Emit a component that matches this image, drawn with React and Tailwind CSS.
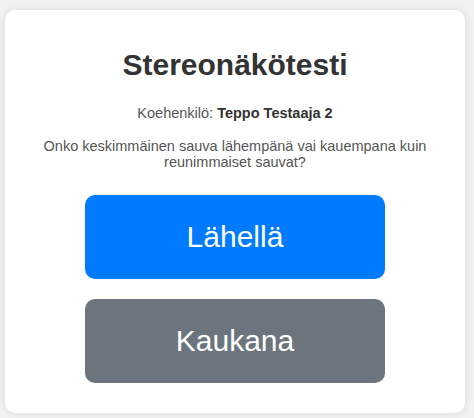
export default function App() {
  return (
    <div
      className="min-h-[418px] bg-[#f2f2f2] pt-[10px] pl-[5px] leading-[normal]"
      style={{ fontFamily: '"Liberation Sans", Arial, sans-serif' }}
    >
      <div className="w-[460px] rounded-[10px] bg-white shadow-[0_0_10px_rgba(0,0,0,0.1)] pt-[38px] pb-[30px] flex flex-col items-center text-center">
        <h1 className="text-[30px] font-bold text-[#333] leading-[normal]">Stereonäkötesti</h1>
        <p className="mt-[23px] text-[14.5px] leading-[16px] text-[#555]">
          Koehenkilö: <strong className="font-bold text-[#333]">Teppo Testaaja 2</strong>
        </p>
        <p className="mt-[17px] text-[14.5px] leading-[16px] text-[#555] px-[30px]">
          Onko keskimmäinen sauva lähempänä vai kauempana kuin reunimmaiset sauvat?
        </p>
        <button className="mt-[25px] w-[300px] h-[84px] rounded-[10px] bg-[#007bff] text-white text-[30px] flex items-center justify-center">
          Lähellä
        </button>
        <button className="mt-[20px] w-[300px] h-[84px] rounded-[10px] bg-[#6c757d] text-white text-[30px] flex items-center justify-center">
          Kaukana
        </button>
      </div>
    </div>
  );
}
